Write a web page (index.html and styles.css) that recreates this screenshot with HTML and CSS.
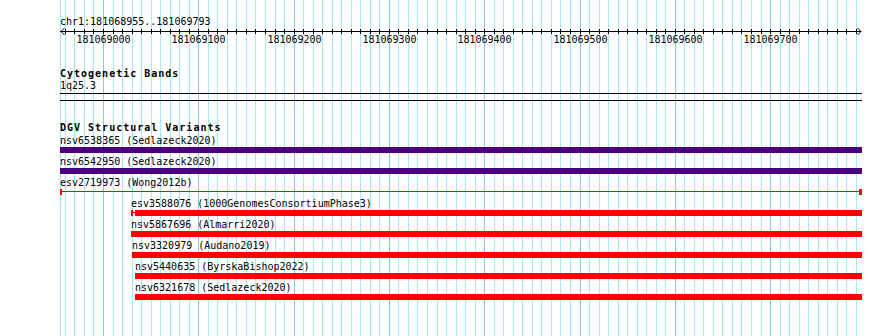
FILE: index.html
```html
<!DOCTYPE html>
<html lang="en">
<head>
<meta charset="utf-8">
<title>Genome view</title>
<link rel="stylesheet" href="styles.css">
</head>
<body>
<div class="browser">
  <svg class="grid" width="890" height="336" viewBox="0 0 890 336" aria-hidden="true">
    <g class="grid-minor">
      <rect x="60" y="0" width="1" height="336"/><rect x="65" y="0" width="1" height="336"/><rect x="74" y="0" width="1" height="336"/><rect x="84" y="0" width="1" height="336"/><rect x="93" y="0" width="1" height="336"/>
      <rect x="113" y="0" width="1" height="336"/><rect x="122" y="0" width="1" height="336"/><rect x="132" y="0" width="1" height="336"/><rect x="141" y="0" width="1" height="336"/><rect x="151" y="0" width="1" height="336"/><rect x="160" y="0" width="1" height="336"/><rect x="170" y="0" width="1" height="336"/><rect x="179" y="0" width="1" height="336"/><rect x="189" y="0" width="1" height="336"/>
      <rect x="208" y="0" width="1" height="336"/><rect x="217" y="0" width="1" height="336"/><rect x="227" y="0" width="1" height="336"/><rect x="236" y="0" width="1" height="336"/><rect x="246" y="0" width="1" height="336"/><rect x="255" y="0" width="1" height="336"/><rect x="265" y="0" width="1" height="336"/><rect x="275" y="0" width="1" height="336"/><rect x="284" y="0" width="1" height="336"/>
      <rect x="303" y="0" width="1" height="336"/><rect x="313" y="0" width="1" height="336"/><rect x="322" y="0" width="1" height="336"/><rect x="332" y="0" width="1" height="336"/><rect x="341" y="0" width="1" height="336"/><rect x="351" y="0" width="1" height="336"/><rect x="360" y="0" width="1" height="336"/><rect x="370" y="0" width="1" height="336"/><rect x="379" y="0" width="1" height="336"/>
      <rect x="398" y="0" width="1" height="336"/><rect x="408" y="0" width="1" height="336"/><rect x="417" y="0" width="1" height="336"/><rect x="427" y="0" width="1" height="336"/><rect x="437" y="0" width="1" height="336"/><rect x="446" y="0" width="1" height="336"/><rect x="456" y="0" width="1" height="336"/><rect x="465" y="0" width="1" height="336"/><rect x="475" y="0" width="1" height="336"/>
      <rect x="494" y="0" width="1" height="336"/><rect x="503" y="0" width="1" height="336"/><rect x="513" y="0" width="1" height="336"/><rect x="522" y="0" width="1" height="336"/><rect x="532" y="0" width="1" height="336"/><rect x="541" y="0" width="1" height="336"/><rect x="551" y="0" width="1" height="336"/><rect x="560" y="0" width="1" height="336"/><rect x="570" y="0" width="1" height="336"/>
      <rect x="589" y="0" width="1" height="336"/><rect x="599" y="0" width="1" height="336"/><rect x="608" y="0" width="1" height="336"/><rect x="618" y="0" width="1" height="336"/><rect x="627" y="0" width="1" height="336"/><rect x="637" y="0" width="1" height="336"/><rect x="646" y="0" width="1" height="336"/><rect x="656" y="0" width="1" height="336"/><rect x="665" y="0" width="1" height="336"/>
      <rect x="684" y="0" width="1" height="336"/><rect x="694" y="0" width="1" height="336"/><rect x="703" y="0" width="1" height="336"/><rect x="713" y="0" width="1" height="336"/><rect x="722" y="0" width="1" height="336"/><rect x="732" y="0" width="1" height="336"/><rect x="741" y="0" width="1" height="336"/><rect x="751" y="0" width="1" height="336"/><rect x="761" y="0" width="1" height="336"/>
      <rect x="780" y="0" width="1" height="336"/><rect x="789" y="0" width="1" height="336"/><rect x="799" y="0" width="1" height="336"/><rect x="808" y="0" width="1" height="336"/><rect x="818" y="0" width="1" height="336"/><rect x="827" y="0" width="1" height="336"/><rect x="837" y="0" width="1" height="336"/><rect x="846" y="0" width="1" height="336"/><rect x="856" y="0" width="1" height="336"/>
    </g>
    <g class="grid-major">
      <rect x="103" y="0" width="1" height="336"/><rect x="198" y="0" width="1" height="336"/><rect x="294" y="0" width="1" height="336"/><rect x="389" y="0" width="1" height="336"/><rect x="484" y="0" width="1" height="336"/><rect x="580" y="0" width="1" height="336"/><rect x="675" y="0" width="1" height="336"/><rect x="770" y="0" width="1" height="336"/>
    </g>
  </svg>

  <div class="tracks">
    <div class="ruler">
      <div class="locus">chr1:181068955..181069793</div>
      <div class="scale">
        <svg class="scale-axis" width="802" height="8" viewBox="60 28 802 8" aria-hidden="true">
          <rect class="axis-ink" x="60" y="31" width="801" height="1"/>
          <g class="axis-ink">
            <rect x="65" y="29" width="1" height="5"/><rect x="74" y="29" width="1" height="5"/><rect x="84" y="29" width="1" height="5"/><rect x="93" y="29" width="1" height="5"/><rect x="103" y="29" width="1" height="5"/><rect x="113" y="29" width="1" height="5"/><rect x="122" y="29" width="1" height="5"/><rect x="132" y="29" width="1" height="5"/><rect x="141" y="29" width="1" height="5"/><rect x="151" y="29" width="1" height="5"/><rect x="160" y="29" width="1" height="5"/><rect x="170" y="29" width="1" height="5"/><rect x="179" y="29" width="1" height="5"/><rect x="189" y="29" width="1" height="5"/><rect x="198" y="29" width="1" height="5"/>
            <rect x="208" y="29" width="1" height="5"/><rect x="217" y="29" width="1" height="5"/><rect x="227" y="29" width="1" height="5"/><rect x="236" y="29" width="1" height="5"/><rect x="246" y="29" width="1" height="5"/><rect x="255" y="29" width="1" height="5"/><rect x="265" y="29" width="1" height="5"/><rect x="275" y="29" width="1" height="5"/><rect x="284" y="29" width="1" height="5"/><rect x="294" y="29" width="1" height="5"/>
            <rect x="303" y="29" width="1" height="5"/><rect x="313" y="29" width="1" height="5"/><rect x="322" y="29" width="1" height="5"/><rect x="332" y="29" width="1" height="5"/><rect x="341" y="29" width="1" height="5"/><rect x="351" y="29" width="1" height="5"/><rect x="360" y="29" width="1" height="5"/><rect x="370" y="29" width="1" height="5"/><rect x="379" y="29" width="1" height="5"/><rect x="389" y="29" width="1" height="5"/>
            <rect x="398" y="29" width="1" height="5"/><rect x="408" y="29" width="1" height="5"/><rect x="417" y="29" width="1" height="5"/><rect x="427" y="29" width="1" height="5"/><rect x="437" y="29" width="1" height="5"/><rect x="446" y="29" width="1" height="5"/><rect x="456" y="29" width="1" height="5"/><rect x="465" y="29" width="1" height="5"/><rect x="475" y="29" width="1" height="5"/><rect x="484" y="29" width="1" height="5"/>
            <rect x="494" y="29" width="1" height="5"/><rect x="503" y="29" width="1" height="5"/><rect x="513" y="29" width="1" height="5"/><rect x="522" y="29" width="1" height="5"/><rect x="532" y="29" width="1" height="5"/><rect x="541" y="29" width="1" height="5"/><rect x="551" y="29" width="1" height="5"/><rect x="560" y="29" width="1" height="5"/><rect x="570" y="29" width="1" height="5"/><rect x="580" y="29" width="1" height="5"/>
            <rect x="589" y="29" width="1" height="5"/><rect x="599" y="29" width="1" height="5"/><rect x="608" y="29" width="1" height="5"/><rect x="618" y="29" width="1" height="5"/><rect x="627" y="29" width="1" height="5"/><rect x="637" y="29" width="1" height="5"/><rect x="646" y="29" width="1" height="5"/><rect x="656" y="29" width="1" height="5"/><rect x="665" y="29" width="1" height="5"/><rect x="675" y="29" width="1" height="5"/>
            <rect x="684" y="29" width="1" height="5"/><rect x="694" y="29" width="1" height="5"/><rect x="703" y="29" width="1" height="5"/><rect x="713" y="29" width="1" height="5"/><rect x="722" y="29" width="1" height="5"/><rect x="732" y="29" width="1" height="5"/><rect x="741" y="29" width="1" height="5"/><rect x="751" y="29" width="1" height="5"/><rect x="761" y="29" width="1" height="5"/><rect x="770" y="29" width="1" height="5"/>
            <rect x="780" y="29" width="1" height="5"/><rect x="789" y="29" width="1" height="5"/><rect x="799" y="29" width="1" height="5"/><rect x="808" y="29" width="1" height="5"/><rect x="818" y="29" width="1" height="5"/><rect x="827" y="29" width="1" height="5"/><rect x="837" y="29" width="1" height="5"/><rect x="846" y="29" width="1" height="5"/><rect x="856" y="29" width="1" height="5"/>
          </g>
          <polyline class="axis-arrow" points="64.5,28 61,31.5 64.5,35"/>
          <polyline class="axis-arrow" points="857.5,28 861,31.5 857.5,35"/>
        </svg>
        <span class="tick-label" style="left:43.5px">181069000</span>
        <span class="tick-label" style="left:138.5px">181069100</span>
        <span class="tick-label" style="left:234.5px">181069200</span>
        <span class="tick-label" style="left:329.5px">181069300</span>
        <span class="tick-label" style="left:424.5px">181069400</span>
        <span class="tick-label" style="left:520.5px">181069500</span>
        <span class="tick-label" style="left:615.5px">181069600</span>
        <span class="tick-label" style="left:710.5px">181069700</span>
      </div>
    </div>

    <div class="track track-cyto">
      <div class="track-title">Cytogenetic Bands</div>
      <div class="feature-label">1q25.3</div>
      <div class="band"></div>
    </div>

    <div class="track track-dgv">
      <div class="track-title">DGV Structural Variants</div>
      <div class="feature">
        <div class="feature-label">nsv6538365 (Sedlazeck2020)</div>
        <div class="bar bar-purple"></div>
      </div>
      <div class="feature">
        <div class="feature-label">nsv6542950 (Sedlazeck2020)</div>
        <div class="bar bar-purple"></div>
      </div>
      <div class="feature">
        <div class="feature-label">esv2719973 (Wong2012b)</div>
        <div class="bar bar-line"></div>
      </div>
      <div class="feature" style="margin-left:71px">
        <div class="feature-label">esv3588076 (1000GenomesConsortiumPhase3)</div>
        <div class="bar bar-capped"></div>
      </div>
      <div class="feature" style="margin-left:71px">
        <div class="feature-label">nsv5867696 (Almarri2020)</div>
        <div class="bar bar-red"></div>
      </div>
      <div class="feature" style="margin-left:72px">
        <div class="feature-label">nsv3320979 (Audano2019)</div>
        <div class="bar bar-red"></div>
      </div>
      <div class="feature" style="margin-left:75px">
        <div class="feature-label">nsv5440635 (ByrskaBishop2022)</div>
        <div class="bar bar-red"></div>
      </div>
      <div class="feature" style="margin-left:75px">
        <div class="feature-label">nsv6321678 (Sedlazeck2020)</div>
        <div class="bar bar-red"></div>
      </div>
    </div>
  </div>
</div>
</body>
</html>
```

FILE: styles.css
```css
html, body {
  margin: 0;
  padding: 0;
  background: #ffffff;
}

body {
  width: 890px;
  height: 336px;
  overflow: hidden;
  font-family: "DejaVu Sans Mono", "Liberation Mono", monospace;
  font-size: 10px;
  line-height: 12px;
  color: #000000;
}

.browser {
  position: relative;
  width: 890px;
  height: 336px;
}

.grid {
  position: absolute;
  top: 0;
  left: 0;
  display: block;
}

.grid-minor {
  fill: #a8e8ee;
}

.grid-major {
  fill: #88c6e6;
}

.tracks {
  position: relative;
  display: flex;
  flex-direction: column;
  width: 802px;
  padding-left: 60px;
}

.ruler {
  display: flex;
  flex-direction: column;
  padding-top: 16px;
}

.locus {
  height: 12px;
  white-space: nowrap;
}

.scale {
  position: relative;
  height: 18px;
}

.scale-axis {
  position: absolute;
  top: 0;
  left: 0;
  display: block;
  overflow: visible;
}

.axis-ink {
  fill: #000000;
}

.axis-arrow {
  fill: none;
  stroke: #000000;
  stroke-width: 1;
}

.tick-label {
  position: absolute;
  top: 6px;
  transform: translateX(-50%);
  white-space: nowrap;
}

.track {
  display: flex;
  flex-direction: column;
}

.track-cyto {
  margin-top: 22px;
}

.track-dgv {
  margin-top: 21px;
}

.track-title {
  font-weight: bold;
  letter-spacing: 1px;
  height: 12px;
  white-space: nowrap;
}

.track-dgv .track-title {
  margin-bottom: 1px;
}

.feature-label {
  height: 12px;
  white-space: nowrap;
}

.band {
  box-sizing: border-box;
  margin-top: 1px;
  height: 8px;
  border-top: 1px solid #000000;
  border-bottom: 1px solid #000000;
}

.feature {
  display: flex;
  flex-direction: column;
  margin-bottom: 3px;
}

.bar {
  box-sizing: border-box;
  height: 6px;
}

.bar-purple {
  background: #4b0082;
}

.bar-red {
  background: #ff0000;
}

.bar-line {
  border-left: 2px solid #ff0000;
  border-right: 3px solid #ff0000;
  background: linear-gradient(#ff0000, #ff0000) 0 2px / 100% 1px no-repeat;
}

.bar-capped {
  border-left: 2px solid #ff0000;
  background:
    linear-gradient(#ff0000, #ff0000) 0 2px / 100% 1px no-repeat,
    linear-gradient(#ff0000, #ff0000) 2px 0 / calc(100% - 2px) 100% no-repeat;
}
```
